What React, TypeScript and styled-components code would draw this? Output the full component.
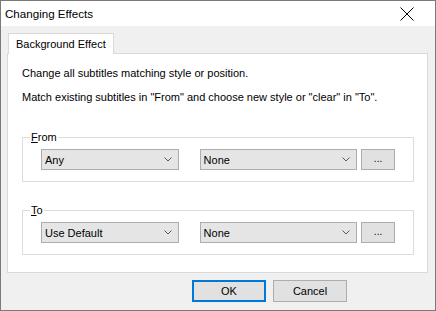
import React from "react";
import styled, { createGlobalStyle } from "styled-components";

const Global = createGlobalStyle`
  html, body { margin: 0; padding: 0; background: #f0f0f0; }
  * { box-sizing: border-box; }
`;

const FONT = `"Liberation Sans", Arial, sans-serif`;

const Window = styled.div`
  width: 436px;
  height: 311px;
  border: 1px solid #7a7a7a;
  background: #f0f0f0;
  display: flex;
  flex-direction: column;
  font-family: ${FONT};
  font-size: 11px;
  color: #000;
`;

const TitleBar = styled.div`
  height: 25px;
  background: #fff;
  display: flex;
  align-items: center;
  justify-content: space-between;
  padding: 0 21px 0 4px;
`;

const Title = styled.span`
  font-size: 11.6px;
`;

const Body = styled.div`
  flex: 1;
  padding: 7px 7px 0 6px;
  display: flex;
  flex-direction: column;
`;

const TabStrip = styled.div`
  display: flex;
  padding-left: 1px;
`;

const Tab = styled.div`
  height: 21px;
  padding: 0 7px;
  background: #fff;
  border: 1px solid #d9d9d9;
  border-bottom: none;
  display: flex;
  align-items: center;
  margin-bottom: -1px;
  position: relative;
  z-index: 1;
`;

const Panel = styled.div`
  height: 220px;
  background: #fff;
  border: 1px solid #d9d9d9;
  padding: 11px 13px 0 14px;
  display: flex;
  flex-direction: column;
`;

const Line = styled.p<{ $gap: number }>`
  margin: 0 0 ${(p) => p.$gap}px 0;
  line-height: 16px;
`;

const Group = styled.fieldset<{ $top: number }>`
  margin: ${(p) => p.$top}px 0 0 0;
  padding: 5px 18px 11px 18px;
  border: 1px solid #dcdcdc;
  min-width: 0;
`;

const Legend = styled.legend`
  padding: 0 1px;
  margin-left: -11px;
  line-height: 14px;
`;

const Row = styled.div`
  display: flex;
  align-items: flex-start;
`;

const Combo = styled.div<{ $w: number; $gap: number }>`
  width: ${(p) => p.$w}px;
  height: 21px;
  margin-right: ${(p) => p.$gap}px;
  background: #e5e5e5;
  border: 1px solid #adadad;
  display: flex;
  align-items: center;
  justify-content: space-between;
  padding: 0 6px 0 3px;
`;

const DotsButton = styled.div`
  width: 34px;
  height: 21px;
  background: #e1e1e1;
  border: 1px solid #adadad;
  display: flex;
  align-items: center;
  justify-content: center;
  font-size: 10px;
  padding-bottom: 2px;
`;

const Footer = styled.div`
  display: flex;
  padding: 7px 0 0 185px;
  gap: 7px;
`;

const Button = styled.div<{ $default?: boolean }>`
  width: 74px;
  height: 22px;
  background: #e1e1e1;
  border: ${(p) => (p.$default ? "2px solid #0078d7" : "1px solid #adadad")};
  display: flex;
  align-items: center;
  justify-content: center;
`;

const U = styled.span`
  text-decoration: underline;
`;

const Chevron = () => (
  <svg width="8" height="5" viewBox="0 0 8 5">
    <path d="M0.5 0.5 L4 4 L7.5 0.5" fill="none" stroke="#5a5a5a" strokeWidth="1" />
  </svg>
);

const CloseIcon = () => (
  <svg width="14" height="14" viewBox="0 0 14 14">
    <path d="M0.5 0.5 L13.5 13.5 M13.5 0.5 L0.5 13.5" stroke="#000" strokeWidth="1" />
  </svg>
);

const SelectRow = ({ first }: { first: string }) => (
  <Row>
    <Combo $w={138} $gap={21}>
      <span>{first}</span>
      <Chevron />
    </Combo>
    <Combo $w={158} $gap={4}>
      <span>None</span>
      <Chevron />
    </Combo>
    <DotsButton>...</DotsButton>
  </Row>
);

export default function App() {
  return (
    <>
      <Global />
      <Window>
        <TitleBar>
          <Title>Changing Effects</Title>
          <CloseIcon />
        </TitleBar>
        <Body>
          <TabStrip>
            <Tab>Background Effect</Tab>
          </TabStrip>
          <Panel>
            <Line $gap={8}>Change all subtitles matching style or position.</Line>
            <Line $gap={0}>Match existing subtitles in "From" and choose new style or "clear" in "To".</Line>
            <Group $top={25}>
              <Legend>
                <U>F</U>rom
              </Legend>
              <SelectRow first="Any" />
            </Group>
            <Group $top={21}>
              <Legend>
                <U>T</U>o
              </Legend>
              <SelectRow first="Use Default" />
            </Group>
          </Panel>
          <Footer>
            <Button $default>OK</Button>
            <Button>Cancel</Button>
          </Footer>
        </Body>
      </Window>
    </>
  );
}
